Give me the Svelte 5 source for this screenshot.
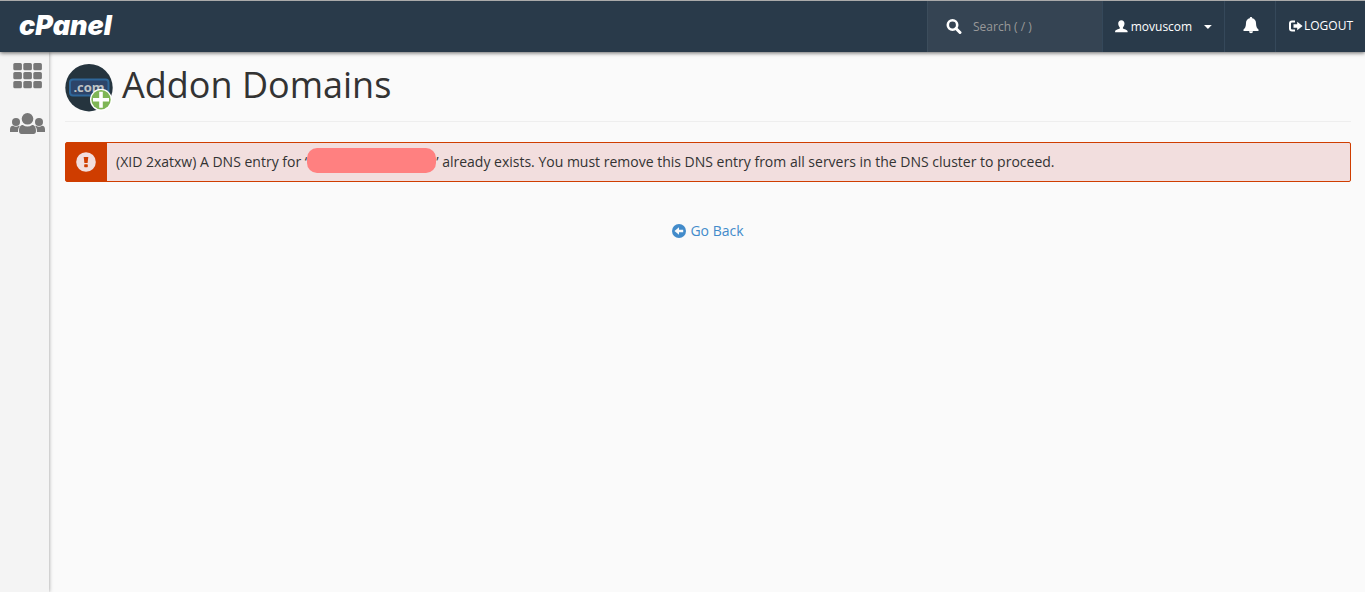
<script lang="ts">
	let query = '';

	const tiles = [0, 1, 2];
	const backUrl = '#back';
</script>

<div class="page">
	<header class="navbar">
		<a class="brand" href="#home">cPanel</a>
		<div class="nav-items">
			<label class="search">
				<svg width="16" height="16" viewBox="0 0 16 16" aria-hidden="true">
					<circle cx="6.5" cy="6" r="4.7" fill="none" stroke="#fff" stroke-width="2.6" />
					<path d="M10 9.5l4 4" stroke="#fff" stroke-width="3" stroke-linecap="round" />
				</svg>
				<input type="text" placeholder="Search ( / )" aria-label="Search" bind:value={query} />
			</label>
			<button class="item user">
				<svg width="13" height="13" viewBox="0 0 13 13" fill="#fff" aria-hidden="true">
					<path
						d="M6.5 0C4.5 0 3.3 1.3 3.3 3.3c0 1.8.5 3.1 1.6 4.2v1.1C3.8 9.5.3 9.8.1 11.3v1.2h12.800v-1.2c-.2-1.500-3.700-1.800-4.800-2.700V7.500c1.100-1.100 1.600-2.400 1.600-4.200C9.700 1.300 8.500 0 6.500 0z"
					/>
				</svg>
				<span>movuscom</span>
				<svg class="caret" width="8" height="4" viewBox="0 0 8 4" fill="#fff" aria-hidden="true">
					<path d="M0 0h8L4 4z" />
				</svg>
			</button>
			<button class="item bell" aria-label="Notifications">
				<svg width="16" height="17" viewBox="0 0 16 17" fill="#fff" aria-hidden="true">
					<path
						d="M8 0c-.8 0-1.300.5-1.200 1.300C4.400 1.800 3 3.700 3 6c0 3.600-1 5.300-2.500 6.600v1.400h15v-1.400C14 11.300 13 9.600 13 6c0-2.300-1.400-4.200-3.800-4.700C9.300.5 8.800 0 8 0zM6 14.200a2 2 0 0 0 4 0z"
					/>
				</svg>
			</button>
			<a class="item logout" href="#logout">
				<svg width="14" height="12" viewBox="0 0 14 12" aria-hidden="true">
					<path d="M6 1.500H3Q1 1.500 1 3.500v5q0 2 2 2h3" fill="none" stroke="#fff" stroke-width="2" />
					<path d="M4.500 4.300H8.200V1.800L13.600 6 8.200 10.200V7.700H4.500z" fill="#fff" />
				</svg>
				<span>LOGOUT</span>
			</a>
		</div>
	</header>

	<div class="body">
		<nav class="sidebar">
			<a href="#tools" aria-label="Tools">
				<svg width="29" height="26" viewBox="0 0 29 26" fill="#777" aria-hidden="true">
					{#each tiles as row}
						{#each tiles as col}
							<rect x={col * 10 + 0.3} y={row * 9} width="8.6" height="7.2" rx="1.5" />
						{/each}
					{/each}
				</svg>
			</a>
			<a href="#users" aria-label="User manager">
				<svg width="35" height="22" viewBox="0 0 35 22" fill="#777" aria-hidden="true">
					<circle cx="6" cy="9" r="4" />
					<circle cx="29" cy="9" r="4" />
					<path d="M0 19v-2.500C0 14.300 1 13 3 12.800c2 1.200 4 1.200 6 0l.8.3C8.500 14.500 8 16.500 8 19z" />
					<path d="M35 19v-2.500c0-2.200-1-3.500-3-3.700-2 1.200-4 1.200-6 0l-.8.3C26.500 14.500 27 16.500 27 19z" />
					<circle cx="17.5" cy="5.800" r="5.800" />
					<path
						d="M9 18c0-3.500 1.200-6 3.800-6 3 2 6.400 2 9.400 0 2.600 0 3.800 2.500 3.800 6 0 2-1 3-2.500 3h-12C10 21 9 20 9 18z"
					/>
				</svg>
			</a>
		</nav>

		<main class="content">
			<h1>
				<svg width="48" height="48" viewBox="0 0 48 48" aria-hidden="true">
					<circle cx="24" cy="23.700" r="23.700" fill="#25343e" />
					<rect
						x="5"
						y="15.5"
						width="38.5"
						height="16"
						rx="3"
						fill="#2d4469"
						stroke="#2f6799"
						stroke-width="2"
					/>
					<text class="tld" x="24" y="27.5" text-anchor="middle" fill="#bfc3c5">.com</text>
					<circle cx="36" cy="35.700" r="11" fill="#fff" />
					<circle cx="36" cy="35.700" r="9.700" fill="#7fb656" />
					<path d="M36 27.700v16M28 35.700h16" stroke="#fff" stroke-width="3.600" />
				</svg>
				<span>Addon Domains</span>
			</h1>

			<div class="alert" role="alert">
				<div class="alert-icon">
					<svg width="20" height="20" viewBox="0 0 20 20" aria-hidden="true">
						<circle cx="10" cy="10" r="9.800" fill="#f2dede" />
						<path d="M7.700 5h4.600l-.7 6H8.400z" fill="#cf3d00" />
						<rect x="8.200" y="12.300" width="3.600" height="2.900" rx=".6" fill="#cf3d00" />
					</svg>
				</div>
				<div class="alert-message">
					(XID 2xatxw) A DNS entry for ‘<span class="redacted"></span>’ already exists. You must
					remove this DNS entry from all servers in the DNS cluster to proceed.
				</div>
			</div>

			<div class="back">
				<a href={backUrl}>
					<svg width="14" height="14" viewBox="0 0 14 14" aria-hidden="true">
						<circle cx="7" cy="7" r="7" fill="#428bca" />
						<path d="M2.500 7L7 3.200V5.800h4.200v2.400H7v2.600z" fill="#fafafa" />
					</svg>
					<span>Go Back</span>
				</a>
			</div>
		</main>
	</div>
</div>

<style>
	:global(body) {
		margin: 0;
		background: #fafafa;
		color: #333;
		font-family: 'Open Sans', sans-serif;
		font-size: 14px;
		line-height: 20px;
	}

	.page {
		display: flex;
		flex-direction: column;
		min-height: 100vh;
	}

	.navbar {
		position: relative;
		z-index: 1;
		display: flex;
		justify-content: space-between;
		height: 51px;
		border-top: 1px solid #aaa;
		background: #293a4a;
		box-shadow: 0 1px 4px rgba(0, 0, 0, 0.6);
	}
	.brand {
		padding-left: 19px;
		color: #fff;
		font-family: Inter, sans-serif;
		font-size: 27px;
		font-style: italic;
		font-weight: 900;
		line-height: 50px;
		text-decoration: none;
	}
	.nav-items {
		display: flex;
	}

	.search {
		display: flex;
		align-items: center;
		gap: 11px;
		box-sizing: border-box;
		width: 175px;
		padding-left: 18px;
		border-left: 1px solid #3c4d5c;
		background: #354453;
	}
	.search input {
		width: 120px;
		padding: 0;
		border: 0;
		outline: none;
		background: none;
		color: #fff;
		font: 12px 'Open Sans', sans-serif;
	}
	.search input::placeholder {
		color: #999;
		opacity: 1;
	}

	.item {
		display: flex;
		align-items: center;
		box-sizing: border-box;
		padding: 0 12px;
		border: 0;
		border-left: 1px solid #35485a;
		background: none;
		color: #fff;
		font: 12px 'Open Sans', sans-serif;
		text-decoration: none;
		cursor: pointer;
	}
	.user {
		gap: 3px;
		width: 122px;
	}
	.caret {
		margin-left: 9px;
	}
	.bell {
		justify-content: center;
		width: 51px;
		padding: 0 11px 2px 12px;
	}
	.logout {
		gap: 1px;
		width: 90px;
		padding: 0 11px 2px 13px;
	}

	.body {
		display: flex;
		flex: 1;
	}
	.sidebar {
		display: flex;
		flex-direction: column;
		align-items: center;
		gap: 24px;
		box-sizing: border-box;
		width: 49px;
		padding: 11px 0 0 6px;
		background: #f4f4f4;
		box-shadow: 0 0 4px rgba(0, 0, 0, 0.4);
	}
	.sidebar a {
		display: flex;
	}

	.content {
		flex: 1;
		padding: 12px 14px 0 16px;
	}
	h1 {
		display: flex;
		gap: 9px;
		margin: 0 0 20px;
		padding-bottom: 9px;
		border-bottom: 1px solid #eee;
		font-size: 36px;
		font-weight: 400;
		line-height: 42px;
	}
	.tld {
		font-size: 13px;
		font-weight: 700;
	}

	.alert {
		display: flex;
		border: 1px solid #cf3d00;
		border-radius: 2px;
		background: #f2dede;
	}
	.alert-icon {
		display: flex;
		align-items: center;
		padding: 0 11px 0 10px;
		background: #cf3d00;
	}
	.alert-message {
		flex: 1;
		padding: 9px;
	}
	.redacted {
		display: inline-block;
		width: 129px;
		height: 25px;
		margin: -8px 0 -2px;
		border-radius: 10px;
		background: #ff8080;
		vertical-align: middle;
	}

	.back {
		display: flex;
		justify-content: center;
		margin-top: 39px;
	}
	.back a {
		display: flex;
		align-items: center;
		gap: 4px;
		color: #428bca;
		text-decoration: none;
	}
</style>
